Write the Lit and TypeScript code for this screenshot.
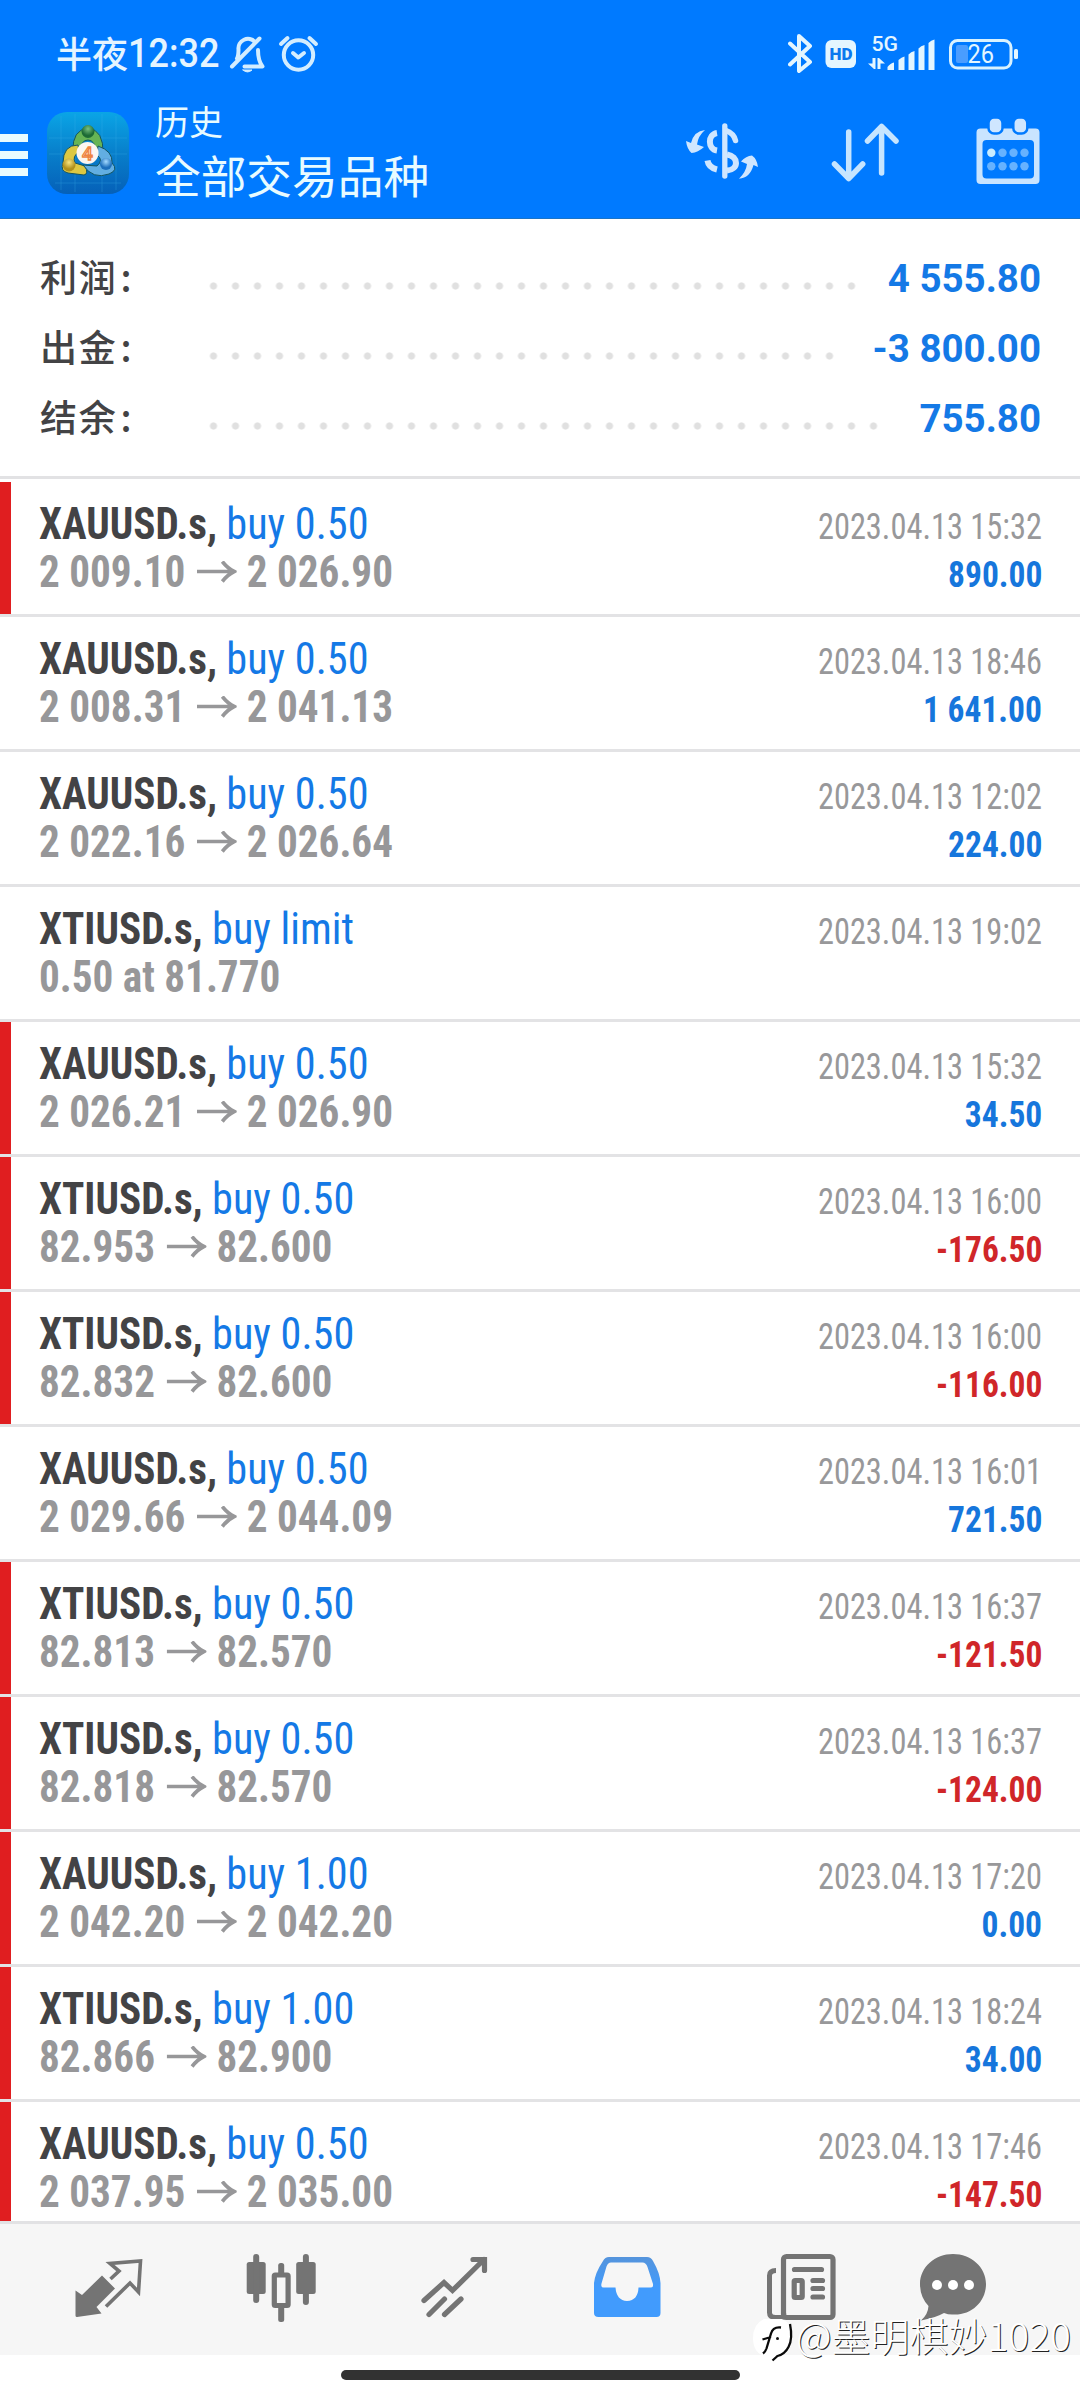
import { LitElement, html, css } from "lit";
import { customElement } from "lit/decorators.js";
import { classMap } from "lit/directives/class-map.js";

interface Deal {
  symbol: string;
  action: string;
  from?: string;
  to?: string;
  note?: string;
  time: string;
  profit?: string;
  marked?: boolean;
}

const DEALS: Deal[] = [
  { symbol: "XAUUSD.s", action: "buy 0.50", from: "2 009.10", to: "2 026.90", time: "2023.04.13 15:32", profit: "890.00", marked: true },
  { symbol: "XAUUSD.s", action: "buy 0.50", from: "2 008.31", to: "2 041.13", time: "2023.04.13 18:46", profit: "1 641.00" },
  { symbol: "XAUUSD.s", action: "buy 0.50", from: "2 022.16", to: "2 026.64", time: "2023.04.13 12:02", profit: "224.00" },
  { symbol: "XTIUSD.s", action: "buy limit", note: "0.50 at 81.770", time: "2023.04.13 19:02" },
  { symbol: "XAUUSD.s", action: "buy 0.50", from: "2 026.21", to: "2 026.90", time: "2023.04.13 15:32", profit: "34.50", marked: true },
  { symbol: "XTIUSD.s", action: "buy 0.50", from: "82.953", to: "82.600", time: "2023.04.13 16:00", profit: "-176.50", marked: true },
  { symbol: "XTIUSD.s", action: "buy 0.50", from: "82.832", to: "82.600", time: "2023.04.13 16:00", profit: "-116.00", marked: true },
  { symbol: "XAUUSD.s", action: "buy 0.50", from: "2 029.66", to: "2 044.09", time: "2023.04.13 16:01", profit: "721.50" },
  { symbol: "XTIUSD.s", action: "buy 0.50", from: "82.813", to: "82.570", time: "2023.04.13 16:37", profit: "-121.50", marked: true },
  { symbol: "XTIUSD.s", action: "buy 0.50", from: "82.818", to: "82.570", time: "2023.04.13 16:37", profit: "-124.00", marked: true },
  { symbol: "XAUUSD.s", action: "buy 1.00", from: "2 042.20", to: "2 042.20", time: "2023.04.13 17:20", profit: "0.00", marked: true },
  { symbol: "XTIUSD.s", action: "buy 1.00", from: "82.866", to: "82.900", time: "2023.04.13 18:24", profit: "34.00", marked: true },
  { symbol: "XAUUSD.s", action: "buy 0.50", from: "2 037.95", to: "2 035.00", time: "2023.04.13 17:46", profit: "-147.50", marked: true },
];

const SUMMARY = [
  { label: "利润", value: "4 555.80", dots: 30 },
  { label: "出金", value: "-3 800.00", dots: 29 },
  { label: "结余", value: "755.80", dots: 31 },
];

@customElement("status-bar")
class StatusBar extends LitElement {
  static styles = css`
    :host { display: flex; height: 108px; align-items: flex-start; color: #e4f4ff; }
    svg { display: block; flex: none; }
    .clock { display: flex; width: 173px; margin-left: 56px; height: 54px; margin-top: 27px; align-items: flex-start; white-space: nowrap; }
    .part { font: 500 36px/50px "Noto Sans CJK SC", sans-serif; width: 73px; }
    .time { font: 500 40px/54px Roboto, sans-serif; transform: scaleX(.9); transform-origin: 0 50%; }
    .left { margin-top: 30px; }
    .right { margin-left: auto; margin-right: 56px; margin-top: 30px; }
    text { font-family: Roboto, sans-serif; }
  `;
  render() {
    return html`
      <div class="clock"><span class="part">半夜</span><span class="time">12:32</span></div>
      <svg class="left" width="92" height="46" viewBox="229 30 92 46" fill="none" stroke="#d3edff" stroke-width="4" stroke-linecap="round" stroke-linejoin="round">
        <path d="M237 58.500c1.500-2.500 1.500-5 1.500-9a9.500 9.500 0 0 1 16.500-7.500M258 50c0 7 1 12 4.500 16.500h-18M232 66.500 259.500 38.500"/>
        <path d="M243 70h9q-4.500 4-9 0z" fill="#d3edff" stroke-width="1"/>
        <circle cx="298.500" cy="55" r="14.700"/>
        <path d="M293 53 298.300 57.500 304 53M281 44l6.500-6M316 44l-6.500-6"/>
      </svg>
      <svg class="right" width="236" height="46" viewBox="788 30 236 46">
        <path d="M790 43.500 810 62 799 71V36L810 46 790 64.500" fill="none" stroke="#e4f6ff" stroke-width="4" stroke-linecap="round" stroke-linejoin="round"/>
        <rect x="825.500" y="40" width="30.500" height="28" rx="6" fill="#e4f6ff"/>
        <text x="829.500" y="60" font-size="17" font-weight="900" fill="#0a78ee" textLength="23" lengthAdjust="spacingAndGlyphs">HD</text>
        <text x="871.500" y="50.500" font-size="21" font-weight="500" fill="#e4f6ff" textLength="26.500" lengthAdjust="spacingAndGlyphs">5G</text>
        <g fill="#e4f6ff">
          <path d="M872.500 58h3v11h-1.500l-6-5.500h4.500zM877.500 58h1.500l6 5.500h-4.500v5.500h-3z"/>
          <path d="M887.500 70v-3q3-4 6.500-4.500v7.500zM898.500 70V60q3-3 6-3.500V70zM908.500 70V54.500q2.500-3 6-3.500v19zM918.500 70V48.500q2.500-3 6-3.500v25zM928.500 70V43q2.500-3 6-3.500V70z"/>
          <rect x="1014" y="49" width="4" height="10" rx="1.500"/>
        </g>
        <rect x="950.500" y="40.500" width="60.500" height="27.500" rx="7" fill="none" stroke="#d9f2ff" stroke-width="3"/>
        <rect x="956" y="45" width="12" height="18" rx="2" fill="#4a9dff"/>
        <text x="967.500" y="63" font-size="25" font-weight="400" fill="#e4f6ff" textLength="26.500" lengthAdjust="spacingAndGlyphs">26</text>
      </svg>
    `;
  }
}

@customElement("app-header")
class AppHeader extends LitElement {
  static styles = css`
    :host { display: flex; height: 110px; align-items: flex-start; }
    svg { display: block; flex: none; }
    .burger { display: flex; flex-direction: column; gap: 9px; margin-top: 26px; width: 28px; margin-right: 19px; }
    .bar { height: 8px; background: #e8fbff; }
    .logo { margin-top: 4px; }
    .titles { display: flex; flex-direction: column; margin-left: 26px; width: 530px; color: #e8fbff; font-family: "Noto Sans CJK SC", sans-serif; white-space: nowrap; }
    .small { font-size: 34px; line-height: 44px; margin-top: -9px; }
    .large { font-size: 45.700px; line-height: 60px; margin-top: 1px; }
    .money { margin-top: 14px; }
    .sort { margin: 14px 0 0 71px; }
    .calendar { margin: 10px 0 0 75px; }
  `;
  render() {
    return html`
      <div class="burger"><div class="bar"></div><div class="bar"></div><div class="bar"></div></div>
      <svg class="logo" width="82" height="82" viewBox="0 0 82 82">
        <defs>
          <linearGradient id="bg" x1="0" y1="0" x2="0" y2="1"><stop offset="0" stop-color="#0aa5e6"/><stop offset=".5" stop-color="#087fcb"/><stop offset="1" stop-color="#0560b8"/></linearGradient>
          <radialGradient id="gr" cy=".3"><stop offset="0" stop-color="#78c080"/><stop offset="1" stop-color="#1d6b35"/></radialGradient>
          <radialGradient id="ye" cy=".3"><stop offset="0" stop-color="#f8e680"/><stop offset="1" stop-color="#b0901c"/></radialGradient>
          <radialGradient id="bl" cy=".3"><stop offset="0" stop-color="#a4daff"/><stop offset="1" stop-color="#1d6fbc"/></radialGradient>
        </defs>
        <rect width="82" height="82" rx="20" fill="url(#bg)"/>
        <path d="M2 26h78M2 42h78M8 71h66M14 4v74M28 2v78M55 2v78M69 4v74" stroke="#41b5ee" stroke-width=".6" opacity=".45"/>
        <g stroke="#14545f" stroke-width="1">
          <path d="M26 39Q25 18 41 16Q57 18 56 42L49 40Q48 28 41 28Q34 28 33 39Z" fill="#66b455"/>
          <path d="M31 33Q16 33 16 51Q13 59 21 61L37 63Q42 62 38 54L28 51Q25 44 32 40Z" fill="#dcc842"/>
          <path d="M51 34Q66 39 65 51Q72 58 62 62Q46 68 36 53L50 54Q57 48 50 43Z" fill="#62aee2"/>
        </g>
        <circle cx="41" cy="19.500" r="6.500" fill="url(#gr)"/>
        <circle cx="22" cy="53" r="6.500" fill="url(#ye)"/>
        <circle cx="59" cy="52" r="6" fill="url(#bl)"/>
        <circle cx="40.500" cy="41" r="11" fill="#fbf6f0"/>
        <text x="40.500" y="48" text-anchor="middle" font-family="Roboto, sans-serif" font-size="19" font-weight="500" fill="#fbe3d0" stroke="#ee8440" stroke-width="1.300">4</text>
      </svg>
      <div class="titles"><span class="small">历史</span><span class="large">全部交易品种</span></div>
      <svg class="money" width="75" height="64" viewBox="685 122 75 64" fill="none" stroke="#cfe6ff" stroke-width="5.300" stroke-linecap="round">
        <path d="M724.800 126v50"/>
        <path d="M726 130.500q8 3 9.500 10" stroke-width="5.500"/>
        <path d="M727 154.500c12 2 12 15 0 16M717 133c-9.500 1.500-9.500 16 0 17.500M707.500 160.500q1 7 9.500 9" stroke-linecap="butt" stroke-width="6"/>
        <path d="M705 130Q694 131 691 143L686 141Q687 149 691.500 153Q698 152.500 704 147L697 144.500Q698 136 705 130zM739 178.700Q750 178 753.500 165L758 167Q757 159 752 155.500Q746 156 741 161.500L747 164Q746 172 739 178.700z" fill="#cfe6ff" stroke="none"/>
      </svg>
      <svg class="sort" width="70" height="64" viewBox="831 122 70 64" fill="none" stroke="#c6e5ff" stroke-width="5.500" stroke-linecap="round" stroke-linejoin="round">
        <path d="M848.700 132v46.500M834.500 164l14.200 14.500 14-14.500M881.600 173v-46.500M867.500 141l14.100-14.500 14.400 14.500"/>
      </svg>
      <svg class="calendar" width="64" height="68" viewBox="976.500 118 64 68">
        <path d="M981 128.500h55q4 0 4 4v47.500q0 4-4 4h-55q-4 0-4-4v-47.500q0-4 4-4zm6 11.500q-4 0-4 4v30.500q0 4 4 4h43.500q4 0 4-4v-30.500q0-4-4-4z" fill="#c9e4ff" fill-rule="evenodd"/>
        <g fill="#cfe6ff" stroke="#007aff" stroke-width="2.500"><rect x="989" y="117.500" width="14" height="16" rx="5.500"/><rect x="1013.800" y="117.500" width="14" height="16" rx="5.500"/></g>
        <circle cx="991.800" cy="152.700" r="4.200" fill="#c9ecff"/>
        <g fill="#66b2ff"><circle cx="1003" cy="152.700" r="4.200"/><circle cx="1014" cy="152.700" r="4.200"/><circle cx="1025" cy="152.700" r="4.200"/><circle cx="991.800" cy="166.300" r="4.200"/><circle cx="1003" cy="166.300" r="4.200"/><circle cx="1014" cy="166.300" r="4.200"/><circle cx="1025" cy="166.300" r="4.200"/></g>
      </svg>
    `;
  }
}

@customElement("deal-row")
class DealRow extends LitElement {
  static properties = { deal: { attribute: false } };
  declare deal: Deal;
  static styles = css`
    :host { display: block; flex: none; }
    .row { box-sizing: border-box; display: flex; justify-content: space-between; height: 135px; border-bottom: 3px solid #e3e3e5; padding-right: 38px; background: #fff; white-space: pre; }
    .mark { width: 11px; flex: none; }
    .mark.on { background: #e01e20; }
    .main { flex: 1; padding: 19px 0 0 28px; display: flex; flex-direction: column; align-items: flex-start; }
    .line { font: 700 43.500px/48px Roboto, sans-serif; font-stretch: 75%; display: flex; align-items: center; height: 48px; color: #979799; transform: scaleX(.946); transform-origin: 0 50%; }
    .sym { color: #434345; }
    .act { color: #1479e6; font-weight: 400; transform: scaleX(1.026); transform-origin: 0 50%; }
    .arrow { margin: 0 11px 0 12px; }
    .side { padding-top: 20.500px; display: flex; flex-direction: column; align-items: flex-end; }
    .time { font: 400 36px/48px Roboto, sans-serif; font-stretch: 75%; color: #98989a; transform: scaleX(.9); transform-origin: 100% 50%; }
    .profit { font: 700 36px/48px Roboto, sans-serif; font-stretch: 75%; color: #1676dc; transform: scaleX(.93); transform-origin: 100% 50%; }
    .profit.loss { color: #d02629; }
  `;
  render() {
    const d = this.deal;
    return html`<div class="row"><div class=${classMap({ mark: true, on: !!d.marked })}></div><div class="main"><div class="line"><span class="sym">${d.symbol}, </span><span class="act">${d.action}</span></div><div class="line">${d.note ??
      html`<span>${d.from}</span><svg class="arrow" width="42" height="24" viewBox="0 0 40 24" preserveAspectRatio="none" fill="none" stroke="#979799" stroke-width="3.700"><path d="M0 10.500h37M25.500 .5q5.500 7 12 10q-6.500 3-12 10"/></svg><span>${d.to}</span>`}</div></div><div class="side"><span class="time">${d.time}</span>${d.profit
      ? html`<span class=${classMap({ profit: true, loss: d.profit.startsWith("-") })}>${d.profit}</span>`
      : ""}</div></div>`;
  }
}

@customElement("tab-bar")
class TabBar extends LitElement {
  static styles = css`
    :host { display: block; background: #f6f6f6; border-top: 3px solid #e2e2e4; box-sizing: border-box; height: 134px; }
    .tabs { display: grid; grid-template-columns: 172px 176px 172px 172px 154px 68px; padding: 28px 0 0 73px; }
    svg { display: block; }
  `;
  render() {
    return html`<div class="tabs">
      <svg width="70" height="72" viewBox="73 2252 70 72" fill="#747474">
        <path d="M75.500 2290.500l6.500 4.500 20-19.500 13 13-18.500 18.500 5 6.500-24.500 3.500q-1.500 0-1.500-1.500z"/>
        <path d="M110.500 2279l8.500-8-9-7.500 30.500-2.500-2 31-8.500-9-24 23.500" fill="none" stroke="#747474" stroke-width="3.600"/>
      </svg>
      <svg width="74" height="72" viewBox="245 2252 74 72" fill="#747474">
        <rect x="246.700" y="2262" width="19" height="32" rx="2.500"/><rect x="253.200" y="2254" width="6" height="49" rx="3"/>
        <rect x="296.200" y="2262" width="19.500" height="32" rx="2.500"/><rect x="302.900" y="2254" width="6" height="51" rx="3"/>
        <rect x="274.300" y="2275" width="13.800" height="30.500" rx="1" fill="none" stroke="#747474" stroke-width="5.200"/>
        <rect x="278.200" y="2263" width="6" height="12" rx="2.500"/><rect x="278.200" y="2305" width="6" height="17" rx="2.500"/>
      </svg>
      <svg width="68" height="72" viewBox="421 2252 68 72" fill="none" stroke="#747474" stroke-width="5.200" stroke-linecap="round">
        <path d="M424 2300.500l20-18 8.500 8 31.500-31M473 2259.500h11.500v11M429 2314.500l15.500-15.500M444.500 2314.500l16.500-15.500"/>
      </svg>
      <svg width="68" height="72" viewBox="593 2252 68 72">
        <defs><linearGradient id="t" x1="0" y1="0" x2="0" y2="1"><stop offset="0" stop-color="#5594dc"/><stop offset=".5" stop-color="#419bfd"/></linearGradient></defs>
        <path d="M609 2257h38q4 0 6 4q7 12 7.500 22v30q0 4-4 4h-58q-4.500 0-4.500-4v-30q1-10 9-22q2-4 6-4zm2 5.500q-3 0-4.500 4l-5 17q-1 4 2 4h12q1 13 11.500 13.500q11-.5 11.500-13.500h12q3 0 2.500-3.500l-5.500-17q-1.500-4.500-5-4.500z" fill="url(#t)" fill-rule="evenodd"/>
      </svg>
      <svg width="72" height="72" viewBox="765 2252 72 72" fill="none" stroke="#747474" stroke-width="5.200" stroke-linecap="round">
        <rect x="783.500" y="2256.500" width="49.500" height="61" rx="3"/>
        <path d="M776 2270.500q-6.500 0-6.500 5v37q0 5 6 5h6q3 0 2-5" stroke-linecap="butt" stroke-width="5"/>
        <path d="M794.500 2269.500h27M813 2280.500h9.500M813 2288.500h9.500M813 2297h9.500"/>
        <rect x="794.200" y="2280.500" width="8" height="17" rx="1"/>
      </svg>
      <svg width="68" height="72" viewBox="919 2252 68 72" fill="#747474">
        <path d="M953 2254c18 0 33 13 33 30c0 18-15 32-34 30.500q-4 0-8-1.500q-7 4-23 7.500q7-6 7.500-14.500q-8.500-9-8.500-22c0-17 15-30 33-30z"/>
        <g fill="#fff"><circle cx="937" cy="2285" r="5"/><circle cx="953" cy="2285" r="5"/><circle cx="969" cy="2285" r="5"/></g>
      </svg>
    </div>`;
  }
}

@customElement("app-root")
class AppRoot extends LitElement {
  static styles = css`
    :host { display: flex; flex-direction: column; width: 1080px; height: 2400px; background: #fff; overflow: hidden; position: relative; }
    .top { background: #007aff; flex: none; border-bottom: 1px solid #1a74c8; box-sizing: border-box; height: 219px; }
    .summary { box-sizing: border-box; height: 260px; flex: none; padding: 23px 39px 0 40px; border-bottom: 3px solid #e2e2e4; }
    .item { display: flex; align-items: center; height: 70px; }
    .label { width: 168px; margin-top: -3px; color: #434345; font: 500 37px/70px "Noto Sans CJK SC", sans-serif; letter-spacing: 1.800px; display: flex; }
    .colon { margin-left: 3px; }
    .dots { height: 8px; margin-top: 17px; background: radial-gradient(circle at 4px 4px, #e0e0e0 3.200px, transparent 4px) 1.500px 0 / 22px 8px; }
    .value { margin-left: auto; margin-top: 3px; color: #1479e6; font: 700 38.500px/70px Roboto, sans-serif; white-space: pre; }
    .deals { flex: 1; min-height: 0; padding-top: 3px; overflow: hidden; display: flex; flex-direction: column; }
    tab-bar { flex: none; }
    .home { flex: none; height: 45px; background: #fff; display: flex; justify-content: center; }
    .pill { width: 399px; height: 10px; margin-top: 15px; border-radius: 5px; background: #323232; }
    .stamp { position: absolute; left: 752px; top: 2309px; display: flex; color: #fff; font: 300 39px/50px "Noto Sans CJK SC", sans-serif; white-space: nowrap; text-shadow: 1px 1px 0 #222; }
  `;
  render() {
    return html`
      <div class="top"><status-bar></status-bar><app-header></app-header></div>
      <div class="summary">
        ${SUMMARY.map((s) => html`<div class="item"><span class="label">${s.label}<span class="colon">:</span></span><span class="dots" style="width:${s.dots * 22}px"></span><span class="value">${s.value}</span></div>`)}
      </div>
      <div class="deals">${DEALS.map((d) => html`<deal-row .deal=${d}></deal-row>`)}</div>
      <tab-bar></tab-bar>
      <div class="home"><div class="pill"></div></div>
      <div class="stamp">
        <svg width="44" height="56" viewBox="752 2310 44 56" fill="none">
          <path d="M764 2320h18q10 4 10 18t-9 18l-10 8v-7h-9q-11-4-11-18t11-19z" fill="#fff"/>
          <path d="M781 2328.500q-8-1-10 6l-4.500 15q-1 3-3.500 5M762.500 2340.500l8.500-2.500M790 2325q3 15-1.500 23q-3.500 7-11 9l-5 4.500" stroke="#0a0a0a" stroke-width="2.300"/>
          <circle cx="777.500" cy="2339.500" r="1.500" fill="#111"/>
        </svg>
        <span>@墨明棋妙1020</span>
      </div>
    `;
  }
}
